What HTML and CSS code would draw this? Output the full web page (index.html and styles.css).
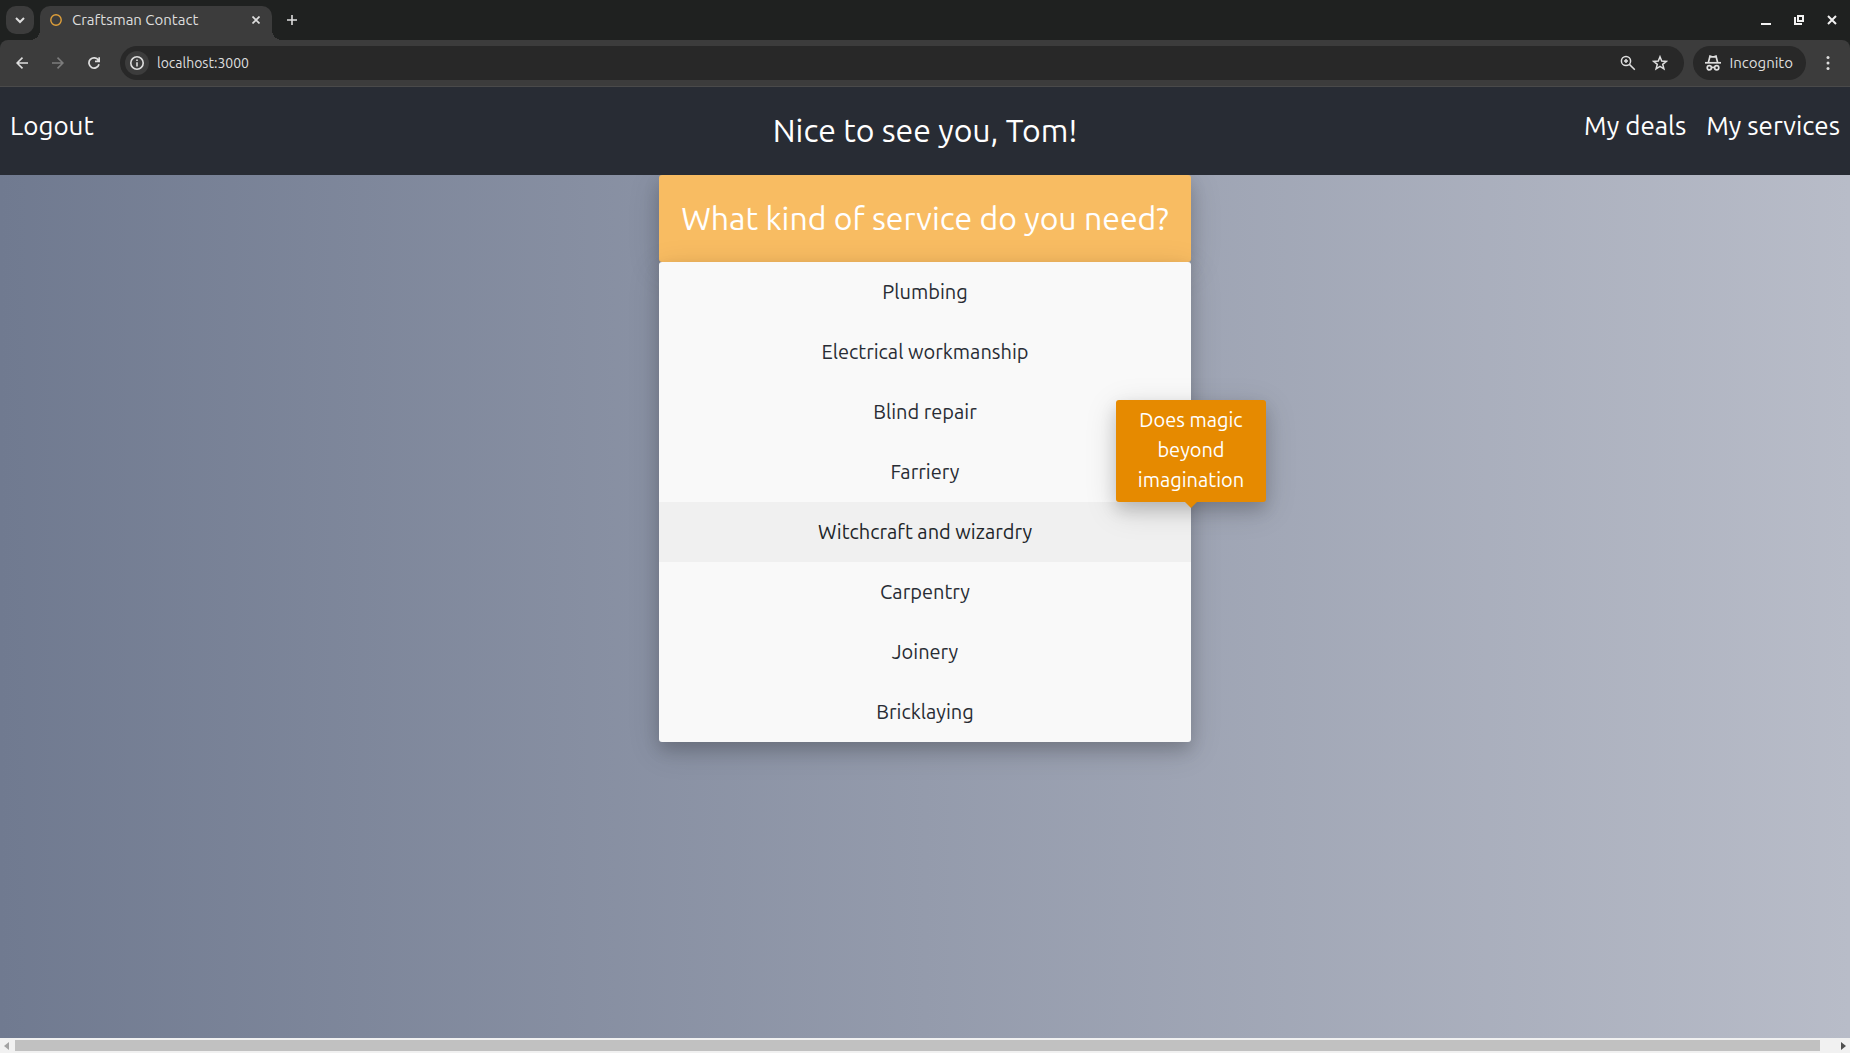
FILE: index.html
```html
<!DOCTYPE html>
<html lang="en">
<head>
<meta charset="utf-8">
<title>Craftsman Contact</title>
<link rel="stylesheet" href="styles.css">
</head>
<body>
<div class="browser">
  <div class="tab-strip">
    <button class="tab-search" aria-label="Search tabs">
      <svg width="12" height="12" viewBox="0 0 12 12" fill="none" stroke="currentColor" stroke-width="2"><path d="M2 4l4 4 4-4"/></svg>
    </button>
    <div class="tab">
      <svg width="12" height="12" viewBox="0 0 12 12" fill="none" stroke="#e0a03a" stroke-width="1.4"><circle cx="6" cy="6" r="5.2"/></svg>
      <span class="tab-title">Craftsman Contact</span>
      <button class="icon-button" aria-label="Close tab">
        <svg width="8" height="8" viewBox="0 0 8 8" fill="none" stroke="currentColor" stroke-width="1.7"><path d="M.5 .5l7 7M7.500 .5l-7 7"/></svg>
      </button>
    </div>
    <button class="icon-button new-tab" aria-label="New tab">
      <svg width="10" height="10" viewBox="0 0 10 10" fill="none" stroke="currentColor" stroke-width="1.6"><path d="M5 0v10M0 5h10"/></svg>
    </button>
    <div class="window-controls">
      <button class="icon-button" aria-label="Minimize"><svg width="10" height="10" viewBox="0 0 10 10" fill="currentColor"><path d="M0 8h10v2H0z"/></svg></button>
      <button class="icon-button" aria-label="Restore"><svg width="10" height="10" viewBox="0 0 10 10" fill="none" stroke="currentColor" stroke-width="2"><path d="M4 1h5v5H4z"/><path d="M1 2v7h7"/></svg></button>
      <button class="icon-button" aria-label="Close"><svg width="10" height="10" viewBox="0 0 10 10" fill="none" stroke="currentColor" stroke-width="2"><path d="M1 1l8 8M9 1l-8 8"/></svg></button>
    </div>
  </div>
  <div class="toolbar">
    <button class="icon-button" aria-label="Back"><svg width="12" height="12" viewBox="0 0 12 12" fill="none" stroke="currentColor" stroke-width="1.6"><path d="M12 6H1M6.500 .6L1.100 6l5.400 5.400"/></svg></button>
    <button class="icon-button forward" aria-label="Forward" disabled><svg width="12" height="12" viewBox="0 0 12 12" fill="none" stroke="currentColor" stroke-width="1.6"><path d="M0 6h11M5.500 .6L10.900 6l-5.400 5.400"/></svg></button>
    <button class="icon-button" aria-label="Reload"><svg width="12" height="12" viewBox="0 0 12 12" fill="none" stroke="currentColor" stroke-width="1.700"><path d="M10.400 3.300A5.100 5.100 0 1 0 11 7.200M11.200 .2v4.200H7"/></svg></button>
    <div class="address">
      <button class="site-info" aria-label="View site information">
        <svg width="14" height="14" viewBox="0 0 14 14" fill="none" stroke="currentColor" stroke-width="1.600"><circle cx="7" cy="7" r="6.200"/><path d="M7 6.200v4.300M7 3.400v1.700"/></svg>
      </button>
      <input class="url" type="text" value="localhost:3000" aria-label="Address">
      <button class="icon-button" aria-label="Zoom"><svg width="16" height="16" viewBox="0 0 16 16" fill="none" stroke="currentColor" stroke-width="1.500"><circle cx="6" cy="6" r="4.600"/><path d="M9.400 9.400l5.400 5.400"/><path d="M6 4v4M4 6h4"/></svg></button>
      <button class="icon-button" aria-label="Bookmark this tab"><svg width="16" height="16" viewBox="0 0 16 16" fill="none" stroke="currentColor" stroke-width="1.500"><path d="M8 1.800l1.700 4.300 4.600.3-3.600 2.900 1.200 4.500L8 11.300l-3.900 2.500 1.200-4.500L1.700 6.400l4.600-.3z"/></svg></button>
    </div>
    <button class="incognito">
      <svg width="16" height="16" viewBox="0 0 16 16" fill="none" stroke="currentColor" stroke-width="1.700"><path d="M0 7.800h16"/><path d="M3.400 7.400L5 1.200l2 .7h2l2-.7 1.600 6.200"/><circle cx="4.300" cy="12.800" r="2.100"/><circle cx="11.700" cy="12.800" r="2.100"/><path d="M6.400 12.400h3.200"/></svg>
      Incognito
    </button>
    <button class="icon-button" aria-label="Menu"><svg width="4" height="14" viewBox="0 0 4 14" fill="currentColor"><circle cx="2" cy="1.600" r="1.500"/><circle cx="2" cy="7" r="1.500"/><circle cx="2" cy="12.400" r="1.500"/></svg></button>
  </div>
</div>
<header class="site-header">
  <nav class="nav"><a href="#logout">Logout</a></nav>
  <h1>Nice to see you, Tom!</h1>
  <nav class="nav nav-end"><a href="#deals">My deals</a><a href="#services">My services</a></nav>
</header>
<main class="page">
  <section class="picker">
    <h2>What kind of service do you need?</h2>
    <ul class="services">
      <li><button>Plumbing</button></li>
      <li><button>Electrical workmanship</button></li>
      <li><button>Blind repair</button></li>
      <li><button>Farriery</button></li>
      <li class="current"><button aria-describedby="tip">Witchcraft and wizardry</button><div class="tooltip" id="tip" role="tooltip">Does magic beyond imagination</div></li>
      <li><button>Carpentry</button></li>
      <li><button>Joinery</button></li>
      <li><button>Bricklaying</button></li>
    </ul>
  </section>
</main>
<div class="scrollbar">
  <svg width="5" height="8" viewBox="0 0 5 8" fill="#a3a3a3"><path d="M5 0v8L0 4z"/></svg>
  <div class="thumb"></div>
  <svg width="5" height="8" viewBox="0 0 5 8" fill="#505050"><path d="M0 0v8l5-4z"/></svg>
</div>
</body>
</html>
```
FILE: styles.css
```css
*, *::before, *::after { box-sizing: border-box; }

body {
  margin: 0;
  min-height: 100vh;
  display: flex;
  flex-direction: column;
  font-family: Ubuntu, "Noto Sans", sans-serif;
  font-size: 20px;
  line-height: 30px;
  color: #282c34;
  background: #fff;
}

button, input { font: inherit; color: inherit; border: 0; padding: 0; background: none; }
h1, h2, ul { margin: 0; padding: 0; }
svg { display: block; flex: none; }

/* Browser window */
.browser {
  background: #1f2120;
  color: #dedede;
  font-size: 15px;
  line-height: 20px;
}
.tab-strip {
  display: flex;
  height: 40px;
  padding: 6px 13px 0 6px;
}
.tab-search {
  display: grid;
  place-items: center;
  width: 28px;
  height: 28px;
  margin-right: 6px;
  border-radius: 10px;
  background: #3c3c3c;
}
.tab {
  position: relative;
  display: flex;
  align-items: center;
  gap: 10px;
  width: 232px;
  height: 34px;
  padding: 0 12px 6px 10px;
  border-radius: 10px 10px 0 0;
  background: #3c3c3c;
}
.tab::before, .tab::after {
  content: "";
  position: absolute;
  bottom: 0;
  width: 10px;
  height: 10px;
}
.tab::before { right: 100%; background: radial-gradient(circle at 0 0, transparent 10px, #3c3c3c 10px); }
.tab::after { left: 100%; background: radial-gradient(circle at 100% 0, transparent 10px, #3c3c3c 10px); }
.tab-title { flex: 1; white-space: nowrap; }
.icon-button { display: grid; place-items: center; flex: none; }
.new-tab { height: 28px; margin-left: 15px; }
.window-controls {
  display: flex;
  gap: 23px;
  height: 28px;
  margin-left: auto;
  color: #f2f2f2;
}
.toolbar {
  display: flex;
  align-items: center;
  height: 47px;
  padding: 0 20px 1px 16px;
  gap: 24px;
  border-radius: 8px 8px 0 0;
  border-bottom: 1px solid #4a4a4a;
  background: #3c3c3c;
}
.forward { color: #7c7c7c; }
.address {
  flex: 1;
  display: flex;
  align-items: center;
  gap: 16px;
  height: 34px;
  margin: 0 -15px 0 -4px;
  padding: 0 16px 0 5px;
  border-radius: 17px;
  background: #282828;
}
.site-info {
  display: grid;
  place-items: center;
  width: 24px;
  height: 24px;
  margin-right: -8px;
  border-radius: 12px;
  background: #3c3c3c;
}
.url { flex: 1; min-width: 0; outline: 0; font-size: 14px; }
.incognito {
  display: flex;
  align-items: center;
  gap: 8px;
  height: 34px;
  padding: 0 13px 0 12px;
  margin-right: -4px;
  border-radius: 17px;
  background: #282828;
}

/* Site */
.site-header {
  position: relative;
  z-index: 1;
  display: grid;
  grid-template-columns: 1fr auto 1fr;
  padding: 20px 10px;
  background: #282c34;
  color: #fff;
}
.nav { display: flex; gap: 20px; font-size: 26px; line-height: 38px; }
.nav-end { justify-content: flex-end; }
.nav a { color: inherit; text-decoration: none; }
h1, h2 { font-size: 32px; line-height: 46px; font-weight: 400; text-align: center; }
h1 { padding-bottom: 2px; }

.page {
  flex: 1;
  display: flex;
  justify-content: center;
  align-items: flex-start;
  background: linear-gradient(90deg, #707a90, #b8bcc8);
}
.picker { width: 532px; }
.picker h2 {
  padding: 20px 0 21px;
  border-radius: 3px;
  background: #f8bc62;
  color: #fff;
  box-shadow: 0 8px 16px rgba(0, 0, 0, .15), 0 8px 32px rgba(0, 0, 0, .15);
}
.services {
  list-style: none;
  border-radius: 3px;
  background: #f9f9f9;
  box-shadow: 0 8px 16px rgba(0, 0, 0, .15), 0 8px 32px rgba(0, 0, 0, .15);
}
.services li { position: relative; }
.services button { display: block; width: 100%; height: 60px; padding-bottom: 1px; text-align: center; }
.current { background: #f0f0f0; color: #212529; }
.tooltip {
  position: absolute;
  bottom: 100%;
  left: 100%;
  z-index: 1;
  width: 150px;
  margin-left: -75px;
  padding: 5px 16px 7px;
  border-radius: 3px;
  background: #e68a00;
  color: #fff;
  text-align: center;
  box-shadow: 0 8px 16px rgba(0, 0, 0, .15), 0 8px 32px rgba(0, 0, 0, .15);
}
.tooltip::after {
  content: "";
  position: absolute;
  top: 100%;
  left: 50%;
  margin-left: -6px;
  border: 6px solid transparent;
  border-top-color: #e68a00;
}

.scrollbar {
  display: flex;
  align-items: center;
  gap: 6px;
  height: 15px;
  padding: 0 4px;
  background: #f1f1f1;
}
.thumb { flex: 1; height: 11px; margin-right: 15px; background: #c1c1c1; }
```
